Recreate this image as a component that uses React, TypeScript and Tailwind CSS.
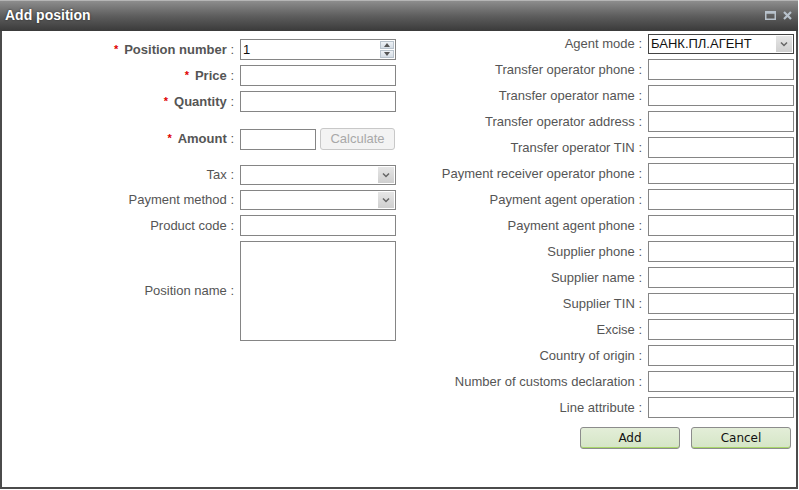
import React from 'react';

const FONT = { fontFamily: '"Liberation Sans", Arial, sans-serif' };

const leftLabelW = 'w-[233px]';
const rightLabelW = 'w-[243px]';

const Arrow = () => (
  <span className="absolute right-[1px] top-[1px] bottom-[1px] w-[16px] bg-gradient-to-b from-[#e6e6e6] to-[#cfcfcf] flex items-center justify-center">
    <svg width="8" height="6" viewBox="0 0 8 6">
      <path d="M1 1.5 L4 4.5 L7 1.5" stroke="#666" strokeWidth="1.5" fill="none" />
    </svg>
  </span>
);

const TextBox = ({ w, h = 'h-[21px]' }: { w: string; h?: string }) => (
  <div className={`${w} ${h} border border-[#858585] bg-white`} />
);

const SelectBox = ({ w, value, dark }: { w: string; value?: string; dark?: boolean }) => (
  <div className={`relative ${w} h-[20px] border ${dark ? 'border-[#444]' : 'border-[#858585]'} bg-white flex items-center pl-[2px] text-[13px] text-[#111]`}>
    {value}
    <Arrow />
  </div>
);

const Label = ({ text, w, required }: { text: string; w: string; required?: boolean }) => (
  <div className={`${w} shrink-0 text-right text-[13px] text-[#555] whitespace-nowrap pr-[1px]`}>
    {required && <span className="text-[#e00000] font-bold text-[11px] mr-[6px] relative -top-[1px]">*</span>}
    <span className={required ? 'font-bold' : ''}>{text}</span> :
  </div>
);

const RIGHT_FIELDS = [
  'Transfer operator phone',
  'Transfer operator name',
  'Transfer operator address',
  'Transfer operator TIN',
  'Payment receiver operator phone',
  'Payment agent operation',
  'Payment agent phone',
  'Supplier phone',
  'Supplier name',
  'Supplier TIN',
  'Excise',
  'Country of origin',
  'Number of customs declaration',
  'Line attribute',
];

const BTN =
  'w-[100px] h-[22px] rounded-[3px] border border-[#8c8c8c] bg-gradient-to-b from-[#e3eed8] to-[#d5e5c6] text-[12px] text-[#111] shadow-[inset_0_-1px_0_#a8d66a]';

export default function App() {
  return (
    <div className="w-[799px] h-[490px] bg-white" style={FONT}>
      <div className="w-[798px] h-[489px] flex flex-col">
        {/* title bar */}
        <div className="h-[31px] shrink-0 flex items-center justify-between px-[5px] bg-gradient-to-b from-[#8d8d8d] via-[#5e5e5e] to-[#3a3a3a] border-t border-[#b5b5b5]">
          <span className="text-white font-bold text-[14px] [text-shadow:0_0_2px_#222] -mt-[2px]">Add position</span>
          <div className="flex items-center gap-[7px] pr-[1px] -mt-[1px]">
            <svg width="11" height="9" viewBox="0 0 11 9">
              <rect x="0.75" y="0.75" width="9.5" height="7.5" stroke="#b8c2cc" strokeWidth="1.5" fill="none" />
              <rect x="0.75" y="0.75" width="9.5" height="2" fill="#b8c2cc" />
            </svg>
            <svg width="9" height="9" viewBox="0 0 9 9">
              <path d="M1 1 L8 8 M8 1 L1 8" stroke="#b8c2cc" strokeWidth="2.2" />
            </svg>
          </div>
        </div>

        {/* body */}
        <div className="flex-1 flex border-x-2 border-b-2 border-[#4b4b4b] bg-white">
          {/* left column */}
          <div className="w-[398px] shrink-0 pt-[8px] flex flex-col">
            <div className="flex items-center gap-[5px]">
              <Label text="Position number" w={leftLabelW} required />
              <div className="relative w-[156px] h-[21px] border border-[#858585] bg-white flex items-center pl-[2px] text-[13px] text-[#111]">
                1
                <div className="absolute right-[1px] top-[1px] bottom-[1px] w-[14px] flex flex-col gap-[1px]">
                  <div className="flex-1 bg-gradient-to-b from-[#eef2f6] to-[#d5dde5] border border-[#b9c3cc] flex items-center justify-center">
                    <svg width="6" height="4" viewBox="0 0 6 4"><path d="M0 4 L3 0 L6 4 Z" fill="#555" /></svg>
                  </div>
                  <div className="flex-1 bg-gradient-to-b from-[#eef2f6] to-[#d5dde5] border border-[#b9c3cc] flex items-center justify-center">
                    <svg width="6" height="4" viewBox="0 0 6 4"><path d="M0 0 L3 4 L6 0 Z" fill="#555" /></svg>
                  </div>
                </div>
              </div>
            </div>
            <div className="flex items-center gap-[5px] mt-[5px]">
              <Label text="Price" w={leftLabelW} required />
              <TextBox w="w-[156px]" />
            </div>
            <div className="flex items-center gap-[5px] mt-[5px]">
              <Label text="Quantity" w={leftLabelW} required />
              <TextBox w="w-[156px]" />
            </div>
            <div className="flex items-center gap-[5px] mt-[16px]">
              <Label text="Amount" w={leftLabelW} required />
              <TextBox w="w-[76px]" />
              <button className="-ml-[1px] w-[75px] h-[22px] rounded-[3px] border border-[#c8c8c8] bg-[#f3f3f3] text-[13px] text-[#a8a8a8]">
                Calculate
              </button>
            </div>
            <div className="flex items-center gap-[5px] mt-[15px]">
              <Label text="Tax" w={leftLabelW} />
              <SelectBox w="w-[156px]" />
            </div>
            <div className="flex items-center gap-[5px] mt-[5px]">
              <Label text="Payment method" w={leftLabelW} />
              <SelectBox w="w-[156px]" />
            </div>
            <div className="flex items-center gap-[5px] mt-[5px]">
              <Label text="Product code" w={leftLabelW} />
              <TextBox w="w-[156px]" />
            </div>
            <div className="flex items-center gap-[5px] mt-[5px]">
              <Label text="Position name" w={leftLabelW} />
              <TextBox w="w-[156px]" h="h-[100px]" />
            </div>
          </div>

          {/* right column */}
          <div className="flex-1 pt-[3px] flex flex-col">
            <div className="flex items-center gap-[5px]">
              <Label text="Agent mode" w={rightLabelW} />
              <SelectBox w="w-[146px]" value="БАНК.ПЛ.АГЕНТ" dark />
            </div>
            {RIGHT_FIELDS.map((f) => (
              <div key={f} className="flex items-center gap-[5px] mt-[5px]">
                <Label text={f} w={rightLabelW} />
                <TextBox w="w-[146px]" />
              </div>
            ))}
            <div className="flex justify-end gap-[11px] mt-[9px] pr-[5px]">
              <button className={BTN} style={{ fontFamily: '"DejaVu Sans", Verdana, sans-serif' }}>
                Add
              </button>
              <button className={BTN} style={{ fontFamily: '"DejaVu Sans", Verdana, sans-serif' }}>
                Cancel
              </button>
            </div>
          </div>
        </div>
      </div>
    </div>
  );
}
